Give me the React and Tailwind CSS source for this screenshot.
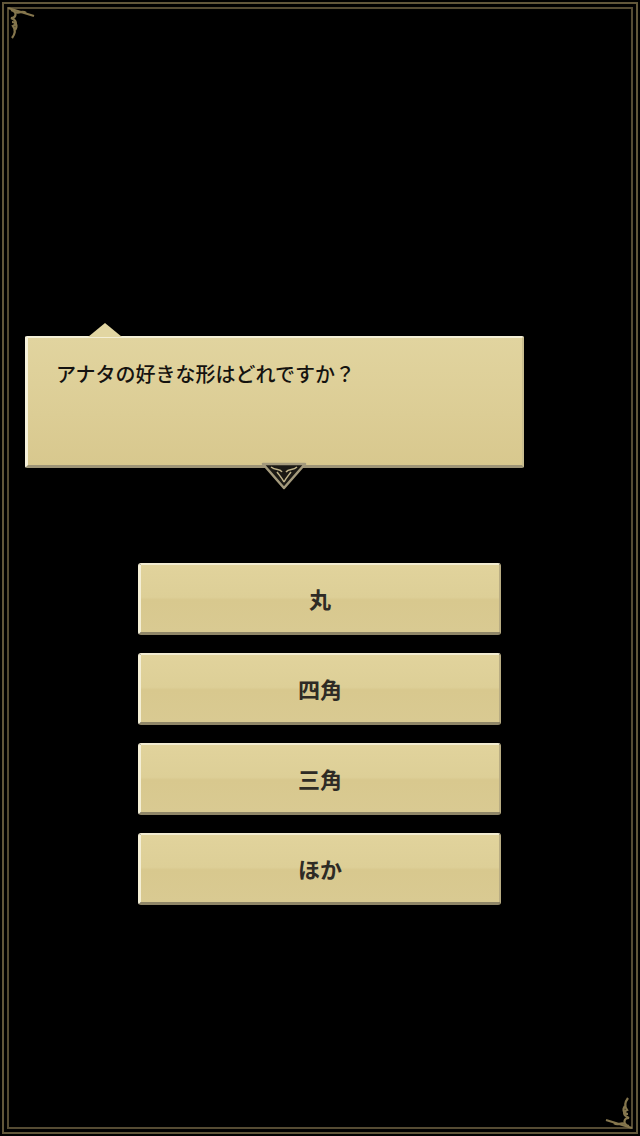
const font = { fontFamily: '"Noto Sans CJK JP", "Noto Sans", sans-serif' };

function Corner({ className }) {
  return (
    <svg className={className} width="30" height="36" viewBox="0 0 30 36" fill="none" stroke="#85764d" strokeWidth="2.2">
      <path d="M2 2 L28 10" />
      <path d="M5 4 C12 6 10 12 5 12 C10 14 12 18 7 20 C10 24 9 28 6 32" />
      <path d="M9 6 C14 8 16 4 20 7" />
      <path d="M6 16 C10 16 12 20 9 24" />
    </svg>
  );
}

function ChoiceButton({ label }) {
  return (
    <div className="rounded-[3px] bg-black p-[3px] shadow-[0_0_6px_rgba(0,0,0,0.9)]">
      <div className="flex h-[72px] items-center justify-center rounded-[3px] border-l-[3px] border-t-[2px] border-r-[2px] border-b-[3px] border-l-[#f4efd6] border-t-[#f2ecd0] border-r-[#b9ad83] border-b-[#8f8668] bg-[linear-gradient(180deg,#e1d39c_0%,#ddcf97_48%,#d8c88e_52%,#d9ca92_100%)]">
        <span className="text-[22px] font-bold text-[#2e2b25]" style={font}>{label}</span>
      </div>
    </div>
  );
}

export default function App() {
  return (
    <div className="relative h-[1136px] w-[640px] overflow-hidden bg-black p-[2px]">
      <div className="h-full w-full border-2 border-[#62573a] p-[3px]">
        <div className="h-full w-full border-2 border-[#554b33]">
          <div className="flex flex-col items-start pt-[327px]">
            <div className="relative ml-[16px] w-[499px]">
              <div className="absolute left-[63px] top-[-13px] h-0 w-0 border-x-[17px] border-b-[14px] border-x-transparent border-b-[#e2d6a2]" />
              <div className="h-[132px] rounded-[2px] border-l-[3px] border-t-[2px] border-r-[2px] border-b-[3px] border-l-[#f6f1da] border-t-[#f4efd6] border-r-[#c9bd8f] border-b-[#9d9477] bg-[linear-gradient(180deg,#e1d49f_0%,#dccd95_60%,#d8c88e_100%)] px-[28px] pt-[22px]">
                <p className="text-[20px] font-medium leading-[28px] text-[#151310]" style={font}>アナタの好きな形はどれですか？</p>
              </div>
              <svg className="absolute left-[236px] top-[126px]" width="46" height="28" viewBox="0 0 46 28">
                <path d="M2 2 H44 L23 26 Z" fill="#1b1914" stroke="#a49a7c" strokeWidth="2.5" strokeLinejoin="round" />
                <path d="M10 5 C15 9 19 6 21 10 M25 10 C28 6 32 9 36 5 M16 10 C19 14 21 16 23 20 M30 10 C27 14 25 16 23 20" stroke="#c2b58b" strokeWidth="1.5" fill="none" />
              </svg>
            </div>
            <div className="ml-[126px] mt-[92px] flex w-[369px] flex-col gap-[12px]">
              <ChoiceButton label="丸" />
              <ChoiceButton label="四角" />
              <ChoiceButton label="三角" />
              <ChoiceButton label="ほか" />
            </div>
          </div>
        </div>
      </div>
      <Corner className="absolute left-[6px] top-[6px]" />
      <Corner className="absolute bottom-[6px] right-[6px] rotate-180" />
    </div>
  );
}
